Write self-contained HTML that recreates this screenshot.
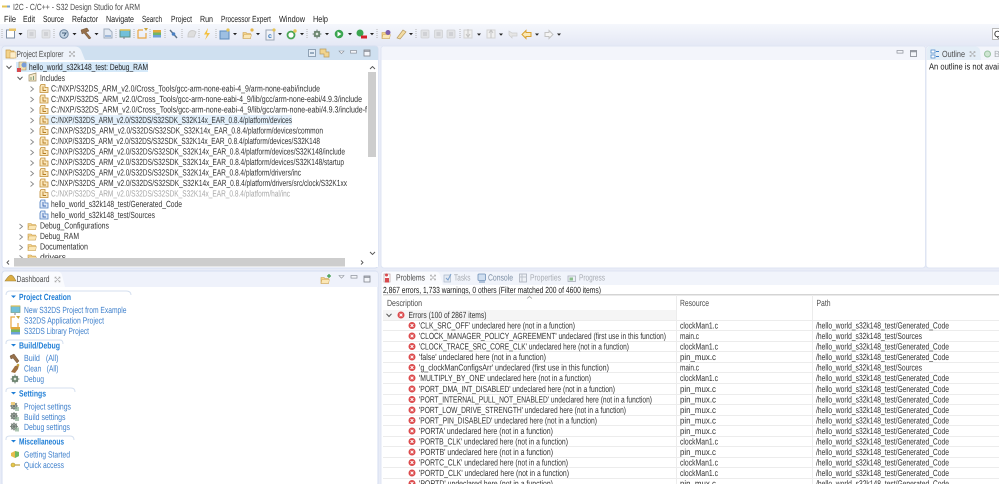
<!DOCTYPE html>
<html><head><meta charset="utf-8"><style>
html,body{margin:0;padding:0;background:#fff;width:999px;height:484px;overflow:hidden}
svg{display:block;filter:blur(.3px)}
text{font-family:"Liberation Sans",sans-serif;font-size:8.9px;fill:#333}
.m{fill:#1c1c1c}
.g{fill:#a8a8a8}
.t{fill:#4c4c4c}
.l{fill:#3f80cc}
.h{fill:#1f7ed6;font-weight:bold}
.d{fill:#a9adb3}
</style></head><body>
<svg width="999" height="484" viewBox="0 0 999 484" xmlns="http://www.w3.org/2000/svg" text-rendering="geometricPrecision">
<defs>
<linearGradient id="tb" x1="0" y1="0" x2="0" y2="1"><stop offset="0" stop-color="#f5f7fc"/><stop offset="1" stop-color="#e4e8f5"/></linearGradient>
<g id="err"><circle cx="0" cy="0" r="3.5" fill="#dc4a4c"/><path d="M-1.4-1.4L1.4 1.4M1.4-1.4L-1.4 1.4" stroke="#fff" stroke-width="1"/></g>
<g id="chev"><path d="M-1.5-2.500L1.500 0L-1.500 2.500" fill="none" stroke="#8a8a8a" stroke-width=".9"/></g>
<g id="chevd"><path d="M-2.500-1.200L0 1.500L2.500-1.200" fill="none" stroke="#555" stroke-width="1"/></g>
<path id="dd" d="M-2-1H2L0 1.300Z" fill="#222"/>
<g id="fold"><path d="M-4-2.500H-1L0-1.500H3.500V3.500H-4Z" fill="#f4d48c" stroke="#c79a48" stroke-width=".6"/><path d="M-4 3.500L-3-.5H4.500L3.500 3.500Z" fill="#fbe7b6" stroke="#c79a48" stroke-width=".4"/></g>
<g id="inc"><path d="M-3-4H1V-1H4V4H-4V-2Z" fill="#fbe8bd" stroke="#c08c34" stroke-width=".8"/><path d="M-1-2V2H2" fill="none" stroke="#b47c24" stroke-width=".9"/></g>
<g id="incb"><path d="M-3-4H1V-1H4V4H-4V-2Z" fill="#e0eaf8" stroke="#4a7cc0" stroke-width=".8"/><path d="M-1-2V2H2" fill="none" stroke="#3a66b0" stroke-width=".9"/></g>
<g id="x"><path d="M-2.500-2.500L2.500 2.500M2.500-2.500L-2.500 2.500M-2.500-1V-2.500H-1M1-2.500H2.500V-1M2.500 1V2.500H1M-1 2.500H-2.500V1" fill="none" stroke="#a5a5a5" stroke-width=".6"/></g>
<g id="min"><rect x="-3" y="-1.500" width="6" height="2.600" fill="#f4f6fa" stroke="#8a8f98" stroke-width=".7"/></g>
<g id="max"><rect x="-3" y="-3" width="6" height="6" fill="#f4f6fa" stroke="#80858e" stroke-width=".8"/><path d="M-3-1.800H3" stroke="#80858e"/></g>
<g id="vm"><path d="M-2.500-1.500H2.500L0 1.200Z" fill="#f6f7fa" stroke="#8a8f98" stroke-width=".6"/></g>
<g id="sep"><path d="M0-5V5" stroke="#b5b5b5" stroke-width="1" stroke-dasharray="1 1"/></g>
<g id="gear"><circle r="3" fill="#8fb093" stroke="#5f7364" stroke-width=".8"/><path d="M-4.500 0H4.500M0-4.500V4.500M-3-3L3 3M3-3L-3 3" stroke="#647a68" stroke-width=".8"/><circle r="1.200" fill="#e5ebe5"/></g>
<g id="gear2"><circle r="2.800" fill="#c4cac6" stroke="#667068" stroke-width=".8"/><path d="M-4 0H4M0-4V4M-3-3L3 3M3-3L-3 3" stroke="#6f7a72" stroke-width=".8"/><path d="M1 1H5V5H1Z" fill="#8aae92" opacity=".7"/></g>
<g id="grayi"><rect x="-4" y="-4" width="8" height="8" rx="1" fill="#e2e3e6" stroke="#d0d1d4" stroke-width=".8"/><path d="M-2-2H2V2H-2Z" fill="#d0d1d5"/></g>
</defs>

<!-- window chrome -->
<rect width="999" height="484" fill="#e8ecf7"/>
<rect width="999" height="24" fill="#fff"/>
<rect y="24" width="999" height="22" fill="url(#tb)"/>

<!-- title -->
<path d="M2 6.500H7" stroke="#e4c456" stroke-width="2"/><path d="M7 6.500H10" stroke="#7aa0cc" stroke-width="2"/>
<text class="t" x="13" y="10" textLength="127" lengthAdjust="spacingAndGlyphs">I2C - C/C++ - S32 Design Studio for ARM</text>

<!-- menu -->
<g class="menu">
<text class="m" x="4" y="22" textLength="12" lengthAdjust="spacingAndGlyphs">File</text>
<text class="m" x="23" y="22" textLength="12" lengthAdjust="spacingAndGlyphs">Edit</text>
<text class="m" x="43" y="22" textLength="21" lengthAdjust="spacingAndGlyphs">Source</text>
<text class="m" x="72" y="22" textLength="26" lengthAdjust="spacingAndGlyphs">Refactor</text>
<text class="m" x="106" y="22" textLength="28" lengthAdjust="spacingAndGlyphs">Navigate</text>
<text class="m" x="142" y="22" textLength="20" lengthAdjust="spacingAndGlyphs">Search</text>
<text class="m" x="171" y="22" textLength="21" lengthAdjust="spacingAndGlyphs">Project</text>
<text class="m" x="200" y="22" textLength="13" lengthAdjust="spacingAndGlyphs">Run</text>
<text class="m" x="221" y="22" textLength="50" lengthAdjust="spacingAndGlyphs">Processor Expert</text>
<text class="m" x="279" y="22" textLength="26" lengthAdjust="spacingAndGlyphs">Window</text>
<text class="m" x="313" y="22" textLength="15" lengthAdjust="spacingAndGlyphs">Help</text>
</g>

<!-- toolbar -->
<use href="#sep" x="2" y="34"/>
<rect x="6.500" y="30" width="8" height="8" fill="#fff" stroke="#7f8fa5"/><path d="M9 28.500H16V31H9Z" fill="#e8c468"/>
<use href="#dd" x="20.500" y="34"/>
<use href="#grayi" x="31.500" y="34"/><use href="#grayi" x="46" y="34"/>
<use href="#sep" x="54" y="34"/>
<circle cx="64" cy="34" r="4.200" fill="#c6d6e6" stroke="#6d86a0"/><path d="M62 33H66L64 36" stroke="#44607c" fill="none"/>
<use href="#dd" x="74.500" y="34"/>
<path d="M81 30L87 28L89 31L86 32L91 38L89 39L84 33L82 34Z" fill="#96704a" stroke="#6e5238" stroke-width=".5"/>
<use href="#dd" x="96.500" y="34"/>
<path d="M104 29H109L112 32V38H104Z" fill="#e4eaf3" stroke="#a0adbd"/><path d="M105 36H111" stroke="#5a86c0"/>
<use href="#sep" x="116" y="34"/>
<rect x="120" y="30" width="10" height="7" fill="#72c0da" stroke="#5f8f80"/><path d="M124 37V39" stroke="#778"/><path d="M120 30H130" stroke="#e0bf50" stroke-width="1.500"/>
<use href="#sep" x="134" y="34"/>
<path d="M138 30H143M138 30V38H146V33" fill="none" stroke="#e9a642" stroke-width="1.200"/><path d="M144 28L146 31L148 28Z" fill="#c9a63e"/>
<use href="#sep" x="150" y="34"/>
<rect x="153" y="30" width="8" height="2.500" fill="#e2a93c"/><rect x="153" y="32.500" width="8" height="2.500" fill="#6fb668"/><rect x="153" y="35" width="8" height="2.500" fill="#6da2d9"/>
<use href="#sep" x="165" y="34"/>
<path d="M170 30L177 38" stroke="#607488" stroke-width="1.400"/><circle cx="173.500" cy="34" r="1.800" fill="#4980c2"/>
<use href="#sep" x="182" y="34"/>
<path d="M188 36C188 31 192 29 196 32L194 37H188Z" fill="#dedede" stroke="#cdcdcd"/>
<use href="#sep" x="199" y="34"/>
<path d="M208 28L204 34.500H207L205 40L210 33H207Z" fill="#f3c040"/>
<use href="#sep" x="216" y="34"/>
<rect x="220" y="31" width="9" height="8" fill="#9dbfe2" stroke="#5d8bbc"/><circle cx="228" cy="30" r="1.600" fill="#e4c456"/>
<use href="#dd" x="235" y="34"/>
<use href="#fold" x="247" y="35"/><circle cx="252" cy="30" r="1.600" fill="#e4b548"/>
<use href="#dd" x="258" y="34"/>
<rect x="266" y="30" width="8" height="10" fill="#f1f3f8" stroke="#9aa6b5"/><text x="268" y="38" style="font-size:7px;fill:#3877ba;font-weight:bold">c</text><circle cx="274" cy="30" r="1.600" fill="#e4c456"/>
<use href="#dd" x="280" y="34"/>
<circle cx="291" cy="35" r="3.500" fill="#fff" stroke="#4aa555" stroke-width="1.800"/><circle cx="295" cy="31" r="1.700" fill="#e4c456"/>
<use href="#dd" x="302" y="34"/>
<use href="#sep" x="307" y="34"/>
<use href="#gear" x="317" y="34"/>
<use href="#dd" x="327" y="34"/>
<circle cx="339" cy="34" r="4.300" fill="#3aa550"/><path d="M337.500 31.500V36.500L341.500 34Z" fill="#fff"/>
<use href="#dd" x="350" y="34"/>
<circle cx="360" cy="33" r="3.500" fill="#3aa550"/><rect x="361" y="35.500" width="6" height="3" fill="#d6202a"/>
<use href="#dd" x="372" y="34"/>
<use href="#sep" x="377" y="34"/>
<use href="#fold" x="386" y="35"/><circle cx="388" cy="32.500" r="2.500" fill="#7d5eac"/>
<path d="M397 38L403 30L406 32L400 39Z" fill="#f3dca4" stroke="#b89b60" stroke-width=".7"/>
<use href="#dd" x="411" y="34"/>
<use href="#sep" x="416" y="34"/>
<use href="#grayi" x="425" y="34"/><use href="#grayi" x="438.500" y="34"/><use href="#grayi" x="451" y="34"/>
<use href="#sep" x="460" y="34"/>
<path d="M464 30H472V38H464Z" fill="#f0f0f0" stroke="#d2d2d2"/><path d="M468 29V36M466 34L468 37L470 34" fill="none" stroke="#c4c4c4"/>
<use href="#dd" x="479" y="34.500"/>
<path d="M487 30H495V38H487Z" fill="#f0f0f0" stroke="#d2d2d2"/><path d="M491 38V31M489 33L491 30L493 33" fill="none" stroke="#c4c4c4"/>
<use href="#dd" x="501" y="34.500"/>
<path d="M509 31L512 33H517V36H512V38L509 35Z" fill="#e6e6e6" stroke="#cdcdcd" stroke-width=".7"/>
<path d="M522 34.500L526 30.500V32.500H531V36.500H526V38.500Z" fill="#fbe9b7" stroke="#d9a232"/>
<use href="#dd" x="537" y="34.500"/>
<path d="M553 34.500L549 30.500V32.500H545V36.500H549V38.500Z" fill="#f5f5f5" stroke="#c4c4c4"/>
<use href="#dd" x="559" y="34.500"/>
<rect x="992.500" y="28.500" width="8" height="11" fill="#fff" stroke="#b9b9b9"/><text class="m" x="994" y="37">Q</text>

<!-- PROJECT EXPLORER -->
<rect x="2" y="46" width="376" height="222" rx="3" fill="#fff" stroke="#d6def0"/>
<path d="M3 60V49Q3 46.500 6 46.500H375Q378 46.500 378 49V60Z" fill="#cfe0f0"/>
<path d="M3 60V49Q3 46.500 6 46.500H75Q79 46.500 81 50L85 60Z" fill="#eef3fa"/>
<path d="M6 50H10L11 51H14V58H6Z" fill="#f4d48c" stroke="#c79a48" stroke-width=".7"/><rect x="10" y="52" width="6" height="6" fill="#fdeecb" stroke="#c79a48" stroke-width=".5"/>
<text class="t" x="16.500" y="57" textLength="47" lengthAdjust="spacingAndGlyphs">Project Explorer</text>
<use href="#x" x="72" y="54"/>
<rect x="308.500" y="49.500" width="7" height="7" fill="#e4edf6" stroke="#8fa2b5"/><path d="M310 53H314" stroke="#4a6a8a"/>
<path d="M320 49H326V52H329V57H324V54H320Z" fill="#f1d48e" stroke="#b89b60" stroke-width=".7"/>
<use href="#vm" x="341.500" y="52.500"/><use href="#min" x="353.500" y="52"/><use href="#max" x="367" y="53"/>
<rect x="3" y="60" width="375" height="207" fill="#fff"/>

<rect x="16" y="62" width="132" height="10" fill="#d5e9f9"/>
<use href="#chevd" x="9" y="67"/>
<path d="M19 62H26V70H19Z" fill="#efdfb0" stroke="#9a8a60" stroke-width=".6"/><rect x="17" y="68" width="4" height="4" fill="#d84a4e"/><circle cx="24" cy="65" r="2.500" fill="#7a9ed7"/>
<text class="m" x="29" y="70" textLength="119" lengthAdjust="spacingAndGlyphs">hello_world_s32k148_test: Debug_RAM</text>

<use href="#chevd" x="20" y="78"/>
<path d="M29 75L36 73V81H29Z" fill="#f3e8ca" stroke="#a09068" stroke-width=".7"/><path d="M31 77V80M33.500 76V80" stroke="#7f9e7f"/>
<text x="40" y="81" textLength="25" lengthAdjust="spacingAndGlyphs">Includes</text>

<rect x="39" y="115" width="253" height="10" fill="#e3f0fb"/>
<use href="#chev" x="32" y="89"/><use href="#inc" x="44" y="88.500"/><text x="51" y="91.500" textLength="269" lengthAdjust="spacingAndGlyphs">C:/NXP/S32DS_ARM_v2.0/Cross_Tools/gcc-arm-none-eabi-4_9/arm-none-eabi/include</text>
<use href="#chev" x="32" y="99.500"/><use href="#inc" x="44" y="99"/><text x="51" y="102" textLength="311" lengthAdjust="spacingAndGlyphs">C:/NXP/S32DS_ARM_v2.0/Cross_Tools/gcc-arm-none-eabi-4_9/lib/gcc/arm-none-eabi/4.9.3/include</text>
<use href="#chev" x="32" y="110"/><use href="#inc" x="44" y="109.500"/><text x="51" y="112.500" textLength="316" lengthAdjust="spacingAndGlyphs">C:/NXP/S32DS_ARM_v2.0/Cross_Tools/gcc-arm-none-eabi-4_9/lib/gcc/arm-none-eabi/4.9.3/include-f</text>
<use href="#chev" x="32" y="120.500"/><use href="#inc" x="44" y="120"/><text x="51" y="123" textLength="241" lengthAdjust="spacingAndGlyphs">C:/NXP/S32DS_ARM_v2.0/S32DS/S32SDK_S32K14x_EAR_0.8.4/platform/devices</text>
<use href="#chev" x="32" y="131"/><use href="#inc" x="44" y="130.500"/><text x="51" y="133.500" textLength="272" lengthAdjust="spacingAndGlyphs">C:/NXP/S32DS_ARM_v2.0/S32DS/S32SDK_S32K14x_EAR_0.8.4/platform/devices/common</text>
<use href="#chev" x="32" y="142"/><use href="#inc" x="44" y="141"/><text x="51" y="144" textLength="269" lengthAdjust="spacingAndGlyphs">C:/NXP/S32DS_ARM_v2.0/S32DS/S32SDK_S32K14x_EAR_0.8.4/platform/devices/S32K148</text>
<use href="#chev" x="32" y="152.500"/><use href="#inc" x="44" y="151.500"/><text x="51" y="154.500" textLength="294" lengthAdjust="spacingAndGlyphs">C:/NXP/S32DS_ARM_v2.0/S32DS/S32SDK_S32K14x_EAR_0.8.4/platform/devices/S32K148/include</text>
<use href="#chev" x="32" y="163"/><use href="#inc" x="44" y="162"/><text x="51" y="165" textLength="293" lengthAdjust="spacingAndGlyphs">C:/NXP/S32DS_ARM_v2.0/S32DS/S32SDK_S32K14x_EAR_0.8.4/platform/devices/S32K148/startup</text>
<use href="#chev" x="32" y="173.500"/><use href="#inc" x="44" y="172.500"/><text x="51" y="175.500" textLength="250" lengthAdjust="spacingAndGlyphs">C:/NXP/S32DS_ARM_v2.0/S32DS/S32SDK_S32K14x_EAR_0.8.4/platform/drivers/inc</text>
<use href="#chev" x="32" y="184"/><use href="#inc" x="44" y="183"/><text x="51" y="186" textLength="296" lengthAdjust="spacingAndGlyphs">C:/NXP/S32DS_ARM_v2.0/S32DS/S32SDK_S32K14x_EAR_0.8.4/platform/drivers/src/clock/S32K1xx</text>
<use href="#inc" x="44" y="193.500"/><text class="g" x="51" y="196.500" textLength="239" lengthAdjust="spacingAndGlyphs">C:/NXP/S32DS_ARM_v2.0/S32DS/S32SDK_S32K14x_EAR_0.8.4/platform/hal/inc</text>
<use href="#incb" x="44" y="204"/><text x="51" y="207" textLength="131" lengthAdjust="spacingAndGlyphs">hello_world_s32k148_test/Generated_Code</text>
<use href="#incb" x="44" y="215"/><text x="51" y="218" textLength="104" lengthAdjust="spacingAndGlyphs">hello_world_s32k148_test/Sources</text>
<use href="#chev" x="21" y="226.500"/><use href="#fold" x="32" y="226"/><text x="40" y="228.500" textLength="69" lengthAdjust="spacingAndGlyphs">Debug_Configurations</text>
<use href="#chev" x="21" y="237"/><use href="#fold" x="32" y="236.500"/><text x="40" y="239" textLength="39" lengthAdjust="spacingAndGlyphs">Debug_RAM</text>
<use href="#chev" x="21" y="247.500"/><use href="#fold" x="32" y="247"/><text x="40" y="249.500" textLength="48" lengthAdjust="spacingAndGlyphs">Documentation</text>
<use href="#chev" x="21" y="258"/><use href="#fold" x="32" y="257.500"/><text x="40" y="260" textLength="26" lengthAdjust="spacingAndGlyphs">drivers</text>

<!-- explorer scrollbars -->
<rect x="368" y="61" width="9" height="197" fill="#fff"/>
<path d="M370 69L372.500 66.500L375 69" fill="none" stroke="#555" stroke-width=".9"/>
<rect x="368" y="72" width="8" height="85" fill="#cdcdcd"/>
<path d="M370 252L372.500 254.500L375 252" fill="none" stroke="#555" stroke-width=".9"/>
<rect x="3" y="258" width="374" height="9" fill="#fff"/>
<rect x="14" y="258" width="331" height="8.500" fill="#cdcdcd"/>
<path d="M9 260.500L7 262.500L9 264.500" fill="none" stroke="#555" stroke-width=".9"/>
<path d="M361 260.500L363 262.500L361 264.500" fill="none" stroke="#555" stroke-width=".9"/>

<!-- DASHBOARD -->
<rect x="2" y="271" width="376" height="215" rx="3" fill="#fff" stroke="#d6def0"/>
<path d="M3 287V274Q3 271.500 6 271.500H375Q378 271.500 378 274V287Z" fill="#eff2fb"/>
<path d="M3 287V274Q3 271.500 6 271.500H57Q61 271.500 62 275L65 287Z" fill="#fafbfe"/>
<path d="M5 281Q9 275 11 275Q13 275 16 281Z" fill="#dcae44" stroke="#9c7f36" stroke-width=".6"/>
<text class="t" x="16.500" y="282" textLength="33" lengthAdjust="spacingAndGlyphs">Dashboard</text>
<use href="#x" x="57.500" y="279.500"/>
<use href="#fold" x="325" y="280"/><path d="M327 276H331M329 274V278" stroke="#3c9a48" stroke-width="1.200"/>
<use href="#vm" x="341.500" y="277"/><use href="#min" x="354" y="277"/><use href="#max" x="367" y="279"/>

<!-- dashboard sections -->
<path d="M6 295Q6 291 10 291H126Q131 291 131 295" fill="none" stroke="#d4dfef"/>
<path d="M11 295.500H16L13.500 298Z" fill="#1f7ed6"/>
<text class="h" x="19" y="300" textLength="52" lengthAdjust="spacingAndGlyphs">Project Creation</text>
<rect x="11" y="306" width="9" height="6.500" fill="#72c0da" stroke="#6d9f8c" stroke-width=".7"/><path d="M11 306H20" stroke="#e0bf50" stroke-width="1.200"/><path d="M15 313V315" stroke="#778"/>
<text class="l" x="24" y="313" textLength="102.500" lengthAdjust="spacingAndGlyphs">New S32DS Project from Example</text>
<path d="M15 317H11V328H18V323" fill="none" stroke="#e9a642" stroke-width="1.200"/><path d="M16 316L18.500 319L20 316Z" fill="#c9a63e"/>
<text class="l" x="24" y="323.500" textLength="80" lengthAdjust="spacingAndGlyphs">S32DS Application Project</text>
<rect x="11" y="327" width="9" height="2.500" fill="#e2a93c"/><rect x="11" y="329.500" width="9" height="2.500" fill="#6fb668"/><rect x="11" y="332" width="9" height="2.500" fill="#6da2d9"/>
<text class="l" x="24" y="334" textLength="65" lengthAdjust="spacingAndGlyphs">S32DS Library Project</text>

<path d="M6 344V343Q6 340 10 340H60Q63 340 63 344" fill="none" stroke="#d4dfef"/>
<path d="M11 344H16L13.500 346.500Z" fill="#1f7ed6"/>
<text class="h" x="19" y="348.500" textLength="41" lengthAdjust="spacingAndGlyphs">Build/Debug</text>
<path d="M10 356L14 354L19 361L17 363L13 358L11 359Z" fill="#96704a" stroke="#6e5238" stroke-width=".5"/>
<text class="l" x="24" y="361" textLength="34.500" lengthAdjust="spacingAndGlyphs" xml:space="preserve">Build   (All)</text>
<path d="M11 372L15 366L19 365L18 369L15 373Z" fill="#a0703f"/><circle cx="18" cy="365" r="1.300" fill="#c9a63e"/>
<text class="l" x="24" y="371.500" textLength="34.500" lengthAdjust="spacingAndGlyphs" xml:space="preserve">Clean   (All)</text>
<use href="#gear" x="15" y="379"/>
<text class="l" x="24" y="382" textLength="20" lengthAdjust="spacingAndGlyphs">Debug</text>

<path d="M6 392V391Q6 388 10 388H71Q75 388 75 392" fill="none" stroke="#d4dfef"/>
<path d="M11 392H16L13.500 394.500Z" fill="#1f7ed6"/>
<text class="h" x="19" y="396.500" textLength="27" lengthAdjust="spacingAndGlyphs">Settings</text>
<use href="#gear2" x="14" y="406"/><path d="M11 402H15V405H11Z" fill="#eccc80"/>
<text class="l" x="24" y="409.500" textLength="47" lengthAdjust="spacingAndGlyphs">Project settings</text>
<use href="#gear2" x="14" y="416"/>
<text class="l" x="24" y="420" textLength="41.500" lengthAdjust="spacingAndGlyphs">Build settings</text>
<use href="#gear2" x="14" y="426.500"/>
<text class="l" x="24" y="430" textLength="46" lengthAdjust="spacingAndGlyphs">Debug settings</text>

<path d="M6 440V439Q6 436 10 436H70Q74 436 74 440" fill="none" stroke="#d4dfef"/>
<path d="M11 440H16L13.500 442.500Z" fill="#1f7ed6"/>
<text class="h" x="19" y="444.500" textLength="45" lengthAdjust="spacingAndGlyphs">Miscellaneous</text>
<path d="M11 453L15 451L19 452V456L15 458L11 456Z" fill="#e8bc4c"/><path d="M15 451L19 452V456L15 458Z" fill="#72b85f"/>
<text class="l" x="24" y="457.500" textLength="46" lengthAdjust="spacingAndGlyphs">Getting Started</text>
<circle cx="13" cy="465" r="2" fill="#e8c84a" stroke="#a89440" stroke-width=".6"/><path d="M15 465H20" stroke="#c4a84a" stroke-width="1.300"/>
<text class="l" x="24" y="468" textLength="40" lengthAdjust="spacingAndGlyphs">Quick access</text>

<!-- EDITOR -->
<rect x="381" y="46" width="544.500" height="222" rx="3" fill="#fff" stroke="#dfe5f3"/>
<path d="M381.500 60V49Q381.500 46.500 385 46.500H922Q925 46.500 925 49V60Z" fill="#f3f5fb"/>
<use href="#min" x="900" y="52"/><use href="#max" x="913.500" y="53.500"/>

<!-- OUTLINE -->
<rect x="926" y="46" width="76" height="222" rx="3" fill="#fff" stroke="#dfe5f3"/>
<path d="M926.500 60V49Q926.500 46.500 930 46.500H999V60Z" fill="#f3f5fb"/>
<path d="M927 60V49Q927 46.500 931 46.500H975Q979 46.500 980 50L981 60Z" fill="#e4eef7"/>
<rect x="931" y="50" width="4" height="3" fill="#fff" stroke="#3f80c8" stroke-width=".7"/><rect x="931" y="55" width="4" height="3" fill="#fff" stroke="#3f80c8" stroke-width=".7"/><path d="M936 51.500H939M936 56.500H939" stroke="#3f80c8"/>
<text class="t" x="942" y="57" textLength="23" lengthAdjust="spacingAndGlyphs">Outline</text>
<use href="#x" x="972.500" y="54"/>
<circle cx="987.500" cy="54" r="3" fill="#cfe6d2" stroke="#9ac3a0"/>
<text class="d" x="994" y="57">Bo</text>
<text class="m" x="929" y="69.500" textLength="88" lengthAdjust="spacingAndGlyphs">An outline is not available.</text>

<!-- PROBLEMS -->
<rect x="381" y="271" width="621" height="216" rx="3" fill="#fff" stroke="#dfe5f3"/>
<path d="M381.500 285V274Q381.500 271.500 385 271.500H999V285Z" fill="#f1f4fb"/>
<path d="M381.500 285V274Q381.500 271.500 385 271.500H435Q439 271.500 440 275L443 285Z" fill="#fafbfe"/>
<rect x="384" y="274" width="6" height="8" fill="#fff" stroke="#b8a0a0" stroke-width=".7"/><rect x="385" y="278" width="4" height="4.500" fill="#d84a4e"/><circle cx="386.500" cy="275" r="1.500" fill="#d84a4e"/>
<text class="t" x="396" y="280.500" textLength="29" lengthAdjust="spacingAndGlyphs">Problems</text>
<use href="#x" x="433" y="277.500"/>
<rect x="444" y="275" width="6.500" height="7" fill="#e5eaf3" stroke="#a8b7c8" stroke-width=".7"/><path d="M446 278L448 280L451 274" stroke="#7aa0cc" fill="none"/>
<text class="d" x="454" y="280.500" textLength="16.500" lengthAdjust="spacingAndGlyphs">Tasks</text>
<rect x="478" y="274" width="7.500" height="6.500" rx="1" fill="#cfdef0" stroke="#6f90b8" stroke-width=".8"/><path d="M479 282H485" stroke="#6f90b8"/>
<text class="d" x="488" y="280.500" textLength="25" lengthAdjust="spacingAndGlyphs" style="fill:#7c8ea4">Console</text>
<rect x="519.500" y="274" width="7" height="8" fill="#eef1f6" stroke="#a9b0bb" stroke-width=".8"/><path d="M522 274V282M519.500 277H526.500" stroke="#bdc3cc"/>
<text class="d" x="530" y="280.500" textLength="31" lengthAdjust="spacingAndGlyphs">Properties</text>
<rect x="568" y="276" width="7.500" height="5.500" fill="#eef1f6" stroke="#a9b0bb" stroke-width=".8"/><rect x="569.500" y="277.500" width="3.500" height="3" fill="#8bbd8c"/>
<text class="d" x="579" y="280.500" textLength="26" lengthAdjust="spacingAndGlyphs">Progress</text>

<rect x="382" y="285" width="617" height="199" fill="#fff"/>
<text class="m" x="383" y="293" textLength="218" lengthAdjust="spacingAndGlyphs">2,867 errors, 1,733 warnings, 0 others (Filter matched 200 of 4600 items)</text>

<rect x="383" y="294" width="616" height="1.500" fill="#d4d4d4"/>
<path d="M527 298.500L529.500 296.500L532 298.500" fill="none" stroke="#999" stroke-width=".7"/>
<text class="t" x="387" y="306" textLength="35" lengthAdjust="spacingAndGlyphs">Description</text>
<text class="t" x="680" y="306" textLength="29" lengthAdjust="spacingAndGlyphs">Resource</text>
<text class="t" x="816.500" y="306" textLength="14" lengthAdjust="spacingAndGlyphs">Path</text>
<rect x="383" y="310" width="293" height="10" fill="#f5f5f5"/>

<g stroke="#ececec" stroke-width="1">
<path d="M383 320.500H999M383 330.500H999M383 341.500H999M383 351.500H999M383 362.500H999M383 372.500H999M383 383.500H999M383 394.500H999M383 404.500H999M383 415.500H999M383 425.500H999M383 436.500H999M383 446.500H999M383 457.500H999M383 467.500H999M383 478.500H999"/>
<path d="M676.500 295V484M812.500 295V484"/>
</g>

<use href="#chevd" x="389" y="315"/>
<use href="#err" x="401" y="315"/>
<text x="408.500" y="318" textLength="78" lengthAdjust="spacingAndGlyphs">Errors (100 of 2867 items)</text>

<use href="#err" x="412" y="325.500"/><text x="419" y="328.500" textLength="156" lengthAdjust="spacingAndGlyphs">'CLK_SRC_OFF' undeclared here (not in a function)</text>
<text x="680" y="328.500" textLength="38" lengthAdjust="spacingAndGlyphs">clockMan1.c</text><text x="816" y="328.500" textLength="133" lengthAdjust="spacingAndGlyphs">/hello_world_s32k148_test/Generated_Code</text>
<use href="#err" x="412" y="336"/><text x="419" y="339" textLength="247" lengthAdjust="spacingAndGlyphs">'CLOCK_MANAGER_POLICY_AGREEMENT' undeclared (first use in this function)</text>
<text x="680" y="339" textLength="19" lengthAdjust="spacingAndGlyphs">main.c</text><text x="816" y="339" textLength="106" lengthAdjust="spacingAndGlyphs">/hello_world_s32k148_test/Sources</text>
<use href="#err" x="412" y="346.500"/><text x="419" y="349.500" textLength="210" lengthAdjust="spacingAndGlyphs">'CLOCK_TRACE_SRC_CORE_CLK' undeclared here (not in a function)</text>
<text x="680" y="349.500" textLength="38" lengthAdjust="spacingAndGlyphs">clockMan1.c</text><text x="816" y="349.500" textLength="133" lengthAdjust="spacingAndGlyphs">/hello_world_s32k148_test/Generated_Code</text>
<use href="#err" x="412" y="357"/><text x="419" y="360" textLength="127" lengthAdjust="spacingAndGlyphs">'false' undeclared here (not in a function)</text>
<text x="680" y="360" textLength="36" lengthAdjust="spacingAndGlyphs">pin_mux.c</text><text x="816" y="360" textLength="133" lengthAdjust="spacingAndGlyphs">/hello_world_s32k148_test/Generated_Code</text>
<use href="#err" x="412" y="367.500"/><text x="419" y="370.500" textLength="190" lengthAdjust="spacingAndGlyphs">'g_clockManConfigsArr' undeclared (first use in this function)</text>
<text x="680" y="370.500" textLength="19" lengthAdjust="spacingAndGlyphs">main.c</text><text x="816" y="370.500" textLength="106" lengthAdjust="spacingAndGlyphs">/hello_world_s32k148_test/Sources</text>
<use href="#err" x="412" y="378"/><text x="419" y="381" textLength="172" lengthAdjust="spacingAndGlyphs">'MULTIPLY_BY_ONE' undeclared here (not in a function)</text>
<text x="680" y="381" textLength="38" lengthAdjust="spacingAndGlyphs">clockMan1.c</text><text x="816" y="381" textLength="133" lengthAdjust="spacingAndGlyphs">/hello_world_s32k148_test/Generated_Code</text>
<use href="#err" x="412" y="389"/><text x="419" y="392" textLength="196" lengthAdjust="spacingAndGlyphs">'PORT_DMA_INT_DISABLED' undeclared here (not in a function)</text>
<text x="680" y="392" textLength="36" lengthAdjust="spacingAndGlyphs">pin_mux.c</text><text x="816" y="392" textLength="133" lengthAdjust="spacingAndGlyphs">/hello_world_s32k148_test/Generated_Code</text>
<use href="#err" x="412" y="399.500"/><text x="419" y="402.500" textLength="233" lengthAdjust="spacingAndGlyphs">'PORT_INTERNAL_PULL_NOT_ENABLED' undeclared here (not in a function)</text>
<text x="680" y="402.500" textLength="36" lengthAdjust="spacingAndGlyphs">pin_mux.c</text><text x="816" y="402.500" textLength="133" lengthAdjust="spacingAndGlyphs">/hello_world_s32k148_test/Generated_Code</text>
<use href="#err" x="412" y="410"/><text x="419" y="413" textLength="207" lengthAdjust="spacingAndGlyphs">'PORT_LOW_DRIVE_STRENGTH' undeclared here (not in a function)</text>
<text x="680" y="413" textLength="36" lengthAdjust="spacingAndGlyphs">pin_mux.c</text><text x="816" y="413" textLength="133" lengthAdjust="spacingAndGlyphs">/hello_world_s32k148_test/Generated_Code</text>
<use href="#err" x="412" y="420.500"/><text x="419" y="423.500" textLength="178" lengthAdjust="spacingAndGlyphs">'PORT_PIN_DISABLED' undeclared here (not in a function)</text>
<text x="680" y="423.500" textLength="36" lengthAdjust="spacingAndGlyphs">pin_mux.c</text><text x="816" y="423.500" textLength="133" lengthAdjust="spacingAndGlyphs">/hello_world_s32k148_test/Generated_Code</text>
<use href="#err" x="412" y="431"/><text x="419" y="434" textLength="134" lengthAdjust="spacingAndGlyphs">'PORTA' undeclared here (not in a function)</text>
<text x="680" y="434" textLength="36" lengthAdjust="spacingAndGlyphs">pin_mux.c</text><text x="816" y="434" textLength="133" lengthAdjust="spacingAndGlyphs">/hello_world_s32k148_test/Generated_Code</text>
<use href="#err" x="412" y="441.500"/><text x="419" y="444.500" textLength="149" lengthAdjust="spacingAndGlyphs">'PORTB_CLK' undeclared here (not in a function)</text>
<text x="680" y="444.500" textLength="38" lengthAdjust="spacingAndGlyphs">clockMan1.c</text><text x="816" y="444.500" textLength="133" lengthAdjust="spacingAndGlyphs">/hello_world_s32k148_test/Generated_Code</text>
<use href="#err" x="412" y="452"/><text x="419" y="455" textLength="134" lengthAdjust="spacingAndGlyphs">'PORTB' undeclared here (not in a function)</text>
<text x="680" y="455" textLength="36" lengthAdjust="spacingAndGlyphs">pin_mux.c</text><text x="816" y="455" textLength="133" lengthAdjust="spacingAndGlyphs">/hello_world_s32k148_test/Generated_Code</text>
<use href="#err" x="412" y="462.500"/><text x="419" y="465.500" textLength="149" lengthAdjust="spacingAndGlyphs">'PORTC_CLK' undeclared here (not in a function)</text>
<text x="680" y="465.500" textLength="38" lengthAdjust="spacingAndGlyphs">clockMan1.c</text><text x="816" y="465.500" textLength="133" lengthAdjust="spacingAndGlyphs">/hello_world_s32k148_test/Generated_Code</text>
<use href="#err" x="412" y="473"/><text x="419" y="476" textLength="150" lengthAdjust="spacingAndGlyphs">'PORTD_CLK' undeclared here (not in a function)</text>
<text x="680" y="476" textLength="38" lengthAdjust="spacingAndGlyphs">clockMan1.c</text><text x="816" y="476" textLength="133" lengthAdjust="spacingAndGlyphs">/hello_world_s32k148_test/Generated_Code</text>
<use href="#err" x="412" y="483.500"/><text x="419" y="486.500" textLength="134" lengthAdjust="spacingAndGlyphs">'PORTD' undeclared here (not in a function)</text>
<text x="680" y="486.500" textLength="36" lengthAdjust="spacingAndGlyphs">pin_mux.c</text><text x="816" y="486.500" textLength="133" lengthAdjust="spacingAndGlyphs">/hello_world_s32k148_test/Generated_Code</text>
</svg>
</body></html>
